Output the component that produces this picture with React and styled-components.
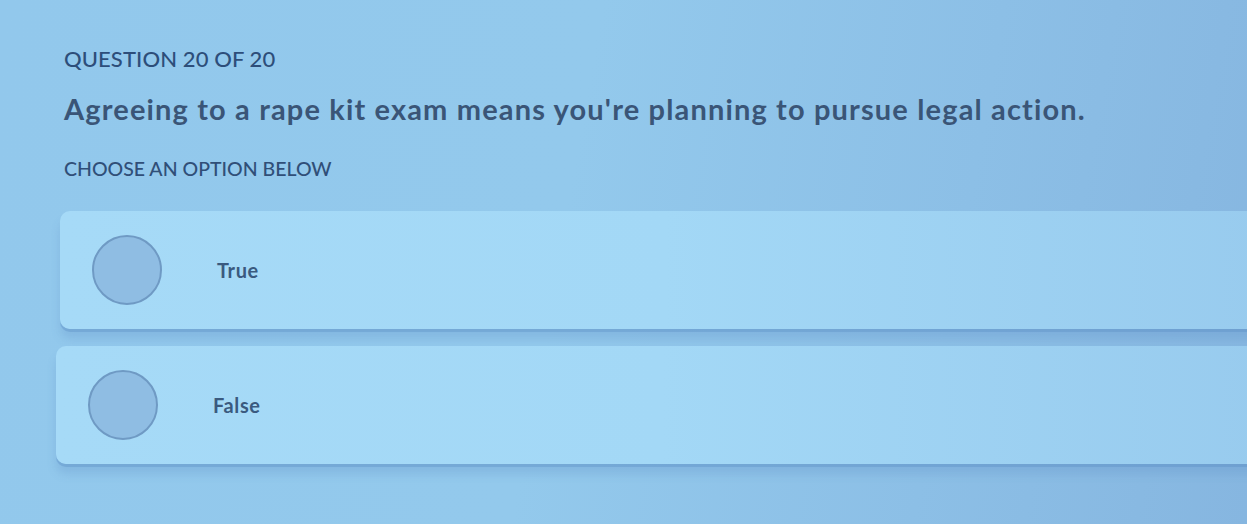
import React, { useState } from "react";
import styled, { createGlobalStyle } from "styled-components";

const GlobalStyle = createGlobalStyle`
  html, body {
    margin: 0;
    padding: 0;
    height: 100%;
    overflow: hidden;
  }
  body {
    font-family: Lato, "Open Sans", "Liberation Sans", sans-serif;
    background: linear-gradient(100deg, #92c8ec 0%, #93c9ec 45%, #8cbfe6 75%, #86b6e0 100%);
    color: #2c4a72;
  }
`;

const Page = styled.div`
  height: 524px;
  padding: 46px 0 0 0;
  box-sizing: border-box;
`;

const Header = styled.div`
  padding-left: 64px;
`;

const Counter = styled.div`
  font-size: 22px;
  font-weight: 500;
  letter-spacing: 0.1px;
  color: #2d4e7a;
  line-height: 26px;
`;

const Prompt = styled.h2`
  margin: 20px 0 0;
  font-size: 29px;
  font-weight: 700;
  color: #3a5577;
  line-height: 34px;
  letter-spacing: 1.15px;
`;

const Hint = styled.div`
  margin-top: 31px;
  font-size: 19.5px;
  font-weight: 500;
  color: #304f78;
  line-height: 24px;
`;

const Options = styled.div`
  margin-top: 30px;
  display: flex;
  flex-direction: column;
  gap: 17px;
`;

const Option = styled.button`
  display: flex;
  align-items: center;
  height: 118px;
  margin-left: ${p => p.$indent}px;
  margin-right: -20px;
  padding: 0 0 0 32px;
  border: none;
  border-radius: 10px;
  background: linear-gradient(90deg, #a6daf7 0%, #a3d8f6 50%, #98cbee 100%);
  box-shadow: 0 3px 0 rgba(90, 140, 195, 0.35), 0 10px 8px rgba(90, 140, 195, 0.25);
  font-family: inherit;
  cursor: pointer;
  text-align: left;
`;

const Radio = styled.span`
  flex: none;
  width: 70px;
  height: 70px;
  border-radius: 50%;
  box-sizing: border-box;
  border: 2px solid #6f9ac4;
  background: ${p => (p.$checked ? "#3d6fa8" : "#8fbde3")};
`;

const Label = styled.span`
  margin-left: 55px;
  font-size: 20px;
  font-weight: 700;
  letter-spacing: 0.6px;
  color: #3a5a7f;
`;

const answers = [
  { label: "True", indent: 60 },
  { label: "False", indent: 56 },
];

export default function App() {
  const [picked, setPicked] = useState(null);

  return (
    <>
      <GlobalStyle />
      <Page>
        <Header>
          <Counter>QUESTION 20 OF 20</Counter>
          <Prompt>Agreeing to a rape kit exam means you're planning to pursue legal action.</Prompt>
          <Hint>CHOOSE AN OPTION BELOW</Hint>
        </Header>
        <Options>
          {answers.map(a => (
            <Option key={a.label} $indent={a.indent} onClick={() => setPicked(a.label)}>
              <Radio $checked={picked === a.label} />
              <Label>{a.label}</Label>
            </Option>
          ))}
        </Options>
      </Page>
    </>
  );
}
